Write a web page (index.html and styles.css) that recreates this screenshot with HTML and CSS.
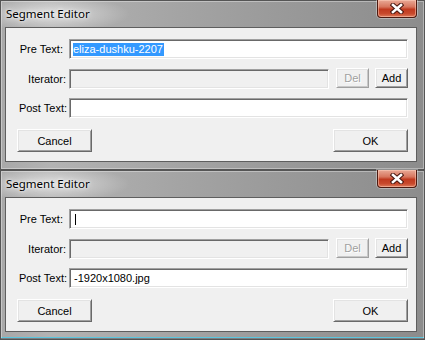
FILE: index.html
```html
<!DOCTYPE html>
<html lang="en">
<head>
    <meta charset="UTF-8">
    <title>Segment Editor</title>
    <link rel="stylesheet" href="styles.css">
</head>
<body>

<!-- First dialog: pre text selected -->
<div class="window">
    <div class="titlebar">
        <span class="title">Segment Editor</span>
        <div class="close">
            <svg width="14" height="11" viewBox="0 0 14 11">
                <path d="M3 2 L11 9 M11 2 L3 9" stroke="#4a1810" stroke-width="4.6" stroke-linecap="square"/>
                <path d="M3 2 L11 9 M11 2 L3 9" stroke="#fff" stroke-width="2.6" stroke-linecap="square"/>
            </svg>
        </div>
    </div>
    <div class="client">
        <div class="row">
            <span class="label label-pre">Pre Text:</span>
            <div class="field"><span class="sel">eliza-dushku-2207</span></div>
        </div>
        <div class="row row-iter">
            <span class="label label-iter">Iterator:</span>
            <div class="field disabled"></div>
            <div class="btn btn-small btn-del disabled">Del</div>
            <div class="btn btn-small btn-add">Add</div>
        </div>
        <div class="row row-post">
            <span class="label">Post Text:</span>
            <div class="field"></div>
        </div>
        <div class="actions">
            <div class="btn btn-wide">Cancel</div>
            <div class="btn btn-wide">OK</div>
        </div>
    </div>
</div>

<!-- Second dialog: caret in pre text, post text filled -->
<div class="window window-last">
    <div class="titlebar">
        <span class="title">Segment Editor</span>
        <div class="close">
            <svg width="14" height="11" viewBox="0 0 14 11">
                <path d="M3 2 L11 9 M11 2 L3 9" stroke="#4a1810" stroke-width="4.6" stroke-linecap="square"/>
                <path d="M3 2 L11 9 M11 2 L3 9" stroke="#fff" stroke-width="2.6" stroke-linecap="square"/>
            </svg>
        </div>
    </div>
    <div class="client">
        <div class="row">
            <span class="label label-pre">Pre Text:</span>
            <div class="field"><span class="caret"></span></div>
        </div>
        <div class="row row-iter">
            <span class="label label-iter">Iterator:</span>
            <div class="field disabled"></div>
            <div class="btn btn-small btn-del disabled">Del</div>
            <div class="btn btn-small btn-add">Add</div>
        </div>
        <div class="row row-post">
            <span class="label">Post Text:</span>
            <div class="field"><span class="value">-1920x1080.jpg</span></div>
        </div>
        <div class="actions">
            <div class="btn btn-wide">Cancel</div>
            <div class="btn btn-wide">OK</div>
        </div>
    </div>
</div>

</body>
</html>
```

FILE: styles.css
```css
/* Windows 7 basic style dialogs */
body {
    margin: 0;
    background-color: #4a4a4a;
    font-family: "Liberation Sans", Arial, sans-serif;
    font-size: 11px;
    color: #000;
}

.window {
    width: 425px;
    height: 170px;
    box-sizing: border-box;
    padding: 0 8px 8px 5px;
    display: flex;
    flex-direction: column;
    background:
        radial-gradient(ellipse 80px 18px at 50px 14px, rgba(255, 255, 255, 0.55), rgba(255, 255, 255, 0) 100%),
        linear-gradient(to right, #a8a8a8 0%, #b3b3b3 12%, #a5a5a5 40%, #9a9a9a 65%, #8c8c8c 100%);
    box-shadow: inset 0 0 0 1px #555, inset 0 0 0 2px rgba(255, 255, 255, 0.35);
}

.window-last {
    background:
        linear-gradient(to top, #3a3a3a 0, #3a3a3a 2px, #5cc6de 2px, #5cc6de 3px, rgba(0, 0, 0, 0) 3px),
        radial-gradient(ellipse 80px 18px at 50px 14px, rgba(255, 255, 255, 0.55), rgba(255, 255, 255, 0) 100%),
        linear-gradient(to right, #a8a8a8 0%, #b3b3b3 12%, #a5a5a5 40%, #9a9a9a 65%, #8c8c8c 100%);
}

.titlebar {
    height: 27px;
    display: flex;
    align-items: flex-start;
}

.title {
    padding: 6px 0 0 1px;
    font-family: "Noto Sans", "Open Sans", sans-serif;
    font-size: 11.5px;
    line-height: 16px;
    color: #000;
    text-shadow: 0 0 6px #fff, 0 0 3px #fff;
}

.close {
    margin-left: auto;
    width: 40px;
    height: 18px;
    box-sizing: border-box;
    display: flex;
    align-items: center;
    justify-content: center;
    border: 1px solid #4d1a10;
    border-top: none;
    border-radius: 0 0 4px 4px;
    background: linear-gradient(to bottom, #e9a996 0%, #d7765e 40%, #c03a1f 55%, #c8492c 80%, #de7b5c 100%);
    box-shadow: inset 0 0 0 1px rgba(255, 210, 190, 0.5), 0 0 0 1px rgba(255, 255, 255, 0.35);
}

.client {
    flex: 1;
    background-color: #f0f0f0;
    border: 1px solid #5e5e5e;
    padding: 11px 8px 0 0;
}

.row {
    display: flex;
    align-items: center;
    height: 20px;
}

.row-iter {
    margin-top: 10px;
}

.row-post {
    margin-top: 9px;
}

.label {
    width: 61px;
    margin-right: 2px;
    box-sizing: border-box;
    text-align: right;
    white-space: nowrap;
}

.label-pre {
    padding-right: 4px;
}

.label-iter {
    padding-right: 1px;
}

.field {
    flex: 1;
    height: 20px;
    box-sizing: border-box;
    display: flex;
    align-items: center;
    padding-left: 3px;
    background-color: #fff;
    border-top: 1px solid #a0a0a0;
    border-left: 1px solid #a0a0a0;
    border-bottom: 1px solid #fff;
    border-right: 1px solid #fff;
    box-shadow: inset 1px 1px 0 #696969, inset -1px -1px 0 #e3e3e3;
}

.field.disabled {
    background-color: #f0f0f0;
}

.sel {
    display: inline-block;
    height: 13px;
    line-height: 13px;
    padding-right: 1px;
    background-color: #3399ff;
    color: #fff;
}

.value {
    padding-left: 1px;
}

.caret {
    display: inline-block;
    width: 1px;
    height: 11px;
    margin-left: 2px;
    background-color: #000;
}

.btn {
    height: 20px;
    box-sizing: border-box;
    display: flex;
    align-items: center;
    justify-content: center;
    background-color: #f0f0f0;
    border-top: 1px solid #fff;
    border-left: 1px solid #fff;
    border-bottom: 1px solid #696969;
    border-right: 1px solid #696969;
    box-shadow: inset 1px 1px 0 #e3e3e3, inset -1px -1px 0 #a0a0a0;
}

.btn-small {
    width: 33px;
    margin-top: -2px;
}

.btn-del {
    margin-left: 7px;
}

.btn-add {
    margin-left: 6px;
}

.btn.disabled {
    color: #a0a0a0;
    text-shadow: 1px 1px 0 #fff;
    border-bottom-color: #a0a0a0;
    border-right-color: #a0a0a0;
    box-shadow: inset 1px 1px 0 #e3e3e3, inset -1px -1px 0 #c8c8c8;
}

.actions {
    display: flex;
    justify-content: space-between;
    margin-top: 11px;
    padding-left: 11px;
}

.btn-wide {
    width: 75px;
    height: 23px;
}
```
